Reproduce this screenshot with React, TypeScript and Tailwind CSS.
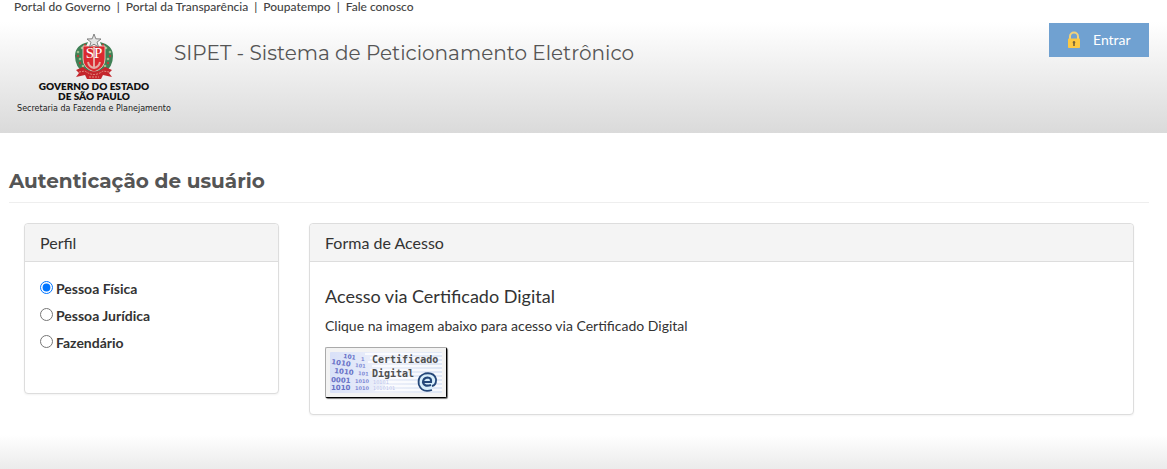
import { useState } from "react";

const links = ["Portal do Governo", "Portal da Transparência", "Poupatempo", "Fale conosco"];
const profiles = ["Pessoa Física", "Pessoa Jurídica", "Fazendário"];

function Crest() {
  return (
    <svg viewBox="0 0 40 46" className="h-[46px] w-10" aria-hidden="true">
      <path d="M14 8Q1 11 1 22Q1 33 10 39L30 39Q39 33 39 22Q39 11 26 8L29 15L31 24L27 34H13L9 24L11 15Z" fill="#3f8055" />
      <g fill="#9cbd8c">
        <circle cx="8" cy="14" r="1.3" /><circle cx="4" cy="18" r="1.3" /><circle cx="6" cy="25" r="1.3" /><circle cx="9" cy="32" r="1.3" />
        <circle cx="32" cy="14" r="1.3" /><circle cx="36" cy="18" r="1.3" /><circle cx="34" cy="25" r="1.3" /><circle cx="31" cy="32" r="1.3" />
      </g>
      <g fill="#b44336">
        <circle cx="11" cy="11" r="1.2" /><circle cx="4" cy="22" r="1.2" /><circle cx="6" cy="29" r="1.2" />
        <circle cx="29" cy="11" r="1.2" /><circle cx="36" cy="22" r="1.2" /><circle cx="34" cy="29" r="1.2" />
      </g>
      <path d="M9 12H31V25Q31 34 20 38Q9 34 9 25Z" fill="#da2930" stroke="#f0d9d0" strokeWidth="0.8" />
      <path d="M20 13V35M14 28Q15 33 20 34Q25 33 26 28" fill="none" stroke="#e4aaa4" strokeWidth="2" />
      <text x="20" y="24" textAnchor="middle" fontSize="15" fill="#fff" fontFamily="Liberation Serif, serif">SP</text>
      <path d="M2 36L9 33Q20 42 31 33L38 36L35 39L38 43L29 41L27 45H13L11 41L2 43L5 39Z" fill="#c4262c" />
      <path d="M5 38L11 37Q20 44 29 37L35 38M15 43H25" fill="none" stroke="#e58a80" strokeWidth="1" strokeDasharray="2 1" />
      <path d="M20 0L21.800 4.800L27 5L23 8.200L24.500 13L20 10.200L15.500 13L17 8.200L13 5L18.200 4.800Z" fill="#e4e4e4" stroke="#777" strokeWidth="0.9" />
    </svg>
  );
}

function Lock() {
  return (
    <svg viewBox="0 0 14 18" className="h-[18px] w-[14px]" aria-hidden="true">
      <path d="M3 8V5.500a4 4 0 0 1 8 0V8" fill="none" stroke="#f2d27a" strokeWidth="2" />
      <rect x="1" y="7.500" width="12" height="9.500" rx="0.800" fill="#fcc842" />
      <path d="M7 10a1.400 1.400 0 0 1 .8 2.500V15H6.200v-2.500A1.400 1.400 0 0 1 7 10Z" fill="#75643a" />
    </svg>
  );
}

function Binary() {
  return (
    <svg viewBox="0 0 112 41" className="absolute inset-0 h-full w-full" aria-hidden="true">
      <defs>
        <linearGradient id="sheet">
          <stop stopColor="#d9e1f8" />
          <stop offset="0.5" stopColor="#eef1fa" />
          <stop offset="1" stopColor="#dde6f5" />
        </linearGradient>
      </defs>
      <rect width="112" height="41" rx="1" fill="url(#sheet)" />
      <path d="M35 2H112M40 6H112M38 10H112M42 14H112M40 18H112M45 22H112M50 26H112M55 30H112M55 34H112M45 38H112" stroke="#fff" strokeWidth="1.3" />
      <g fontFamily="DejaVu Sans, sans-serif" fontWeight="700" fill="#6670c6">
        <text x="13" y="6" fontSize="6" transform="rotate(8 13 6)">101</text>
        <text x="1" y="12" fontSize="7" transform="rotate(8 1 12)">1010</text>
        <text x="4" y="21" fontSize="7" transform="rotate(6 4 21)">1010</text>
        <text x="1" y="30" fontSize="7" transform="rotate(3 1 30)">0001</text>
        <text x="1" y="38" fontSize="7">1010</text>
      </g>
      <g fontFamily="DejaVu Sans, sans-serif" fontWeight="700" fill="#828cd6" fontSize="5">
        <text x="31" y="9">1</text>
        <text x="25" y="15" transform="rotate(6 25 15)">101</text>
        <text x="28" y="23" transform="rotate(5 28 23)">101</text>
        <text x="25" y="31">1010</text>
        <text x="25" y="38">1010</text>
      </g>
      <g fontFamily="DejaVu Sans, sans-serif" fontSize="5" fill="#bcc4ec">
        <text x="43" y="32">10101</text>
        <text x="43" y="38">1010101</text>
      </g>
    </svg>
  );
}

function Panel({ title, children }: { title: string; children: React.ReactNode }) {
  return (
    <section className="rounded border border-[#dddddd] bg-white shadow-xs">
      <h2 className="rounded-t border-b border-[#dddddd] bg-[#f4f4f4] px-[15px] pt-2 pb-[7px] text-base leading-[22px]">{title}</h2>
      {children}
    </section>
  );
}

export default function App() {
  const [profile, setProfile] = useState(profiles[0]);
  return (
    <div className="flex min-h-screen flex-col bg-white font-[Lato,sans-serif] text-[#333333]">
      <nav className="flex h-[22px] px-[14px] text-xs leading-[14px] font-medium text-[#444444]">
        {links.map((link, i) => (
          <span key={link}>
            {i > 0 && <span className="px-[6px]">|</span>}
            <a href="#">{link}</a>
          </span>
        ))}
      </nav>
      <header className="flex items-start bg-linear-to-b from-white to-[#dadada] pr-[18px] pb-[18px] pl-[14px]">
        <a href="#" className="flex w-40 shrink-0 flex-col items-center pt-3 text-center">
          <Crest />
          <strong className="mt-px flex flex-col text-[10px] leading-[10px] font-extrabold whitespace-nowrap text-[#111111]">
            <span>GOVERNO DO ESTADO</span>
            <span>DE SÃO PAULO</span>
          </strong>
          <span className="mt-[2px] font-[DejaVu_Sans,sans-serif] text-[8px] leading-3 whitespace-nowrap text-[#222222]">Secretaria da Fazenda e Planejamento</span>
        </a>
        <h1 className="grow pt-4 font-[Montserrat,Inter,sans-serif] text-xl leading-[30px] text-[#555555]">
          SIPET - Sistema de Peticionamento Eletrônico
        </h1>
        <button type="button" className="mt-px flex h-[34px] w-[100px] items-center gap-3 bg-[#70a1d1] pl-[18px] text-sm text-white">
          <Lock />
          Entrar
        </button>
      </header>
      <main className="grow pt-8 pr-[18px] pl-[9px]">
        <h2 className="border-b border-[#eeeeee] pb-[5px] font-[Montserrat,Inter,sans-serif] text-xl leading-8 font-bold text-[#555555]">
          Autenticação de usuário
        </h2>
        <div className="flex items-start pt-5">
          <div className="w-1/4 px-[15px]">
            <Panel title="Perfil">
              <div role="radiogroup" aria-label="Perfil" className="flex flex-col gap-[7px] px-[15px] pt-[17px] pb-10">
                {profiles.map((name) => (
                  <label key={name} className="flex items-center gap-[3px] text-sm leading-5 font-bold">
                    <input type="radio" name="profile" className="mb-[3px] size-[13px]" checked={profile === name} onChange={() => setProfile(name)} />
                    {name}
                  </label>
                ))}
              </div>
            </Panel>
          </div>
          <div className="w-3/4 px-[15px]">
            <Panel title="Forma de Acesso">
              <div className="px-[15px] pt-6 pb-4">
                <h3 className="text-lg leading-5">Acesso via Certificado Digital</h3>
                <p className="mt-[10px] text-sm leading-5">Clique na imagem abaixo para acesso via Certificado Digital</p>
                <button type="button" className="mt-[11px] block h-[51px] w-[122px] rounded-xs border border-t-[#aaaaaa] border-r-black border-b-black border-l-[#aaaaaa] bg-[#f3f3f3] p-1 shadow-[1px_1px_1px_#777777]">
                  <span className="relative block h-full w-full">
                    <Binary />
                    <span className="absolute top-px left-[42px] flex flex-col text-left font-[DejaVu_Sans_Mono,monospace] text-[10px] leading-[14px] font-bold whitespace-nowrap text-[#505050]">
                      <span>Certificado</span>
                      <span>Digital</span>
                    </span>
                    <svg viewBox="0 0 22 22" className="absolute right-1 bottom-0 size-[22px]" aria-hidden="true">
                      <path d="M16 19Q6 22 3 14Q1 5 9 2.500Q18 1 20 8Q20.500 14 16 15" fill="#d7eefb" stroke="#244779" strokeWidth="1.800" />
                      <path d="M8 11H15Q15.500 6.500 11.500 6.500Q7 7 7 11.500Q8 16 15 14" fill="none" stroke="#244779" strokeWidth="2.200" />
                    </svg>
                  </span>
                </button>
              </div>
            </Panel>
          </div>
        </div>
      </main>
      <footer className="mt-5 h-[34px] bg-linear-to-b from-white to-[#ebebeb]" />
    </div>
  );
}
